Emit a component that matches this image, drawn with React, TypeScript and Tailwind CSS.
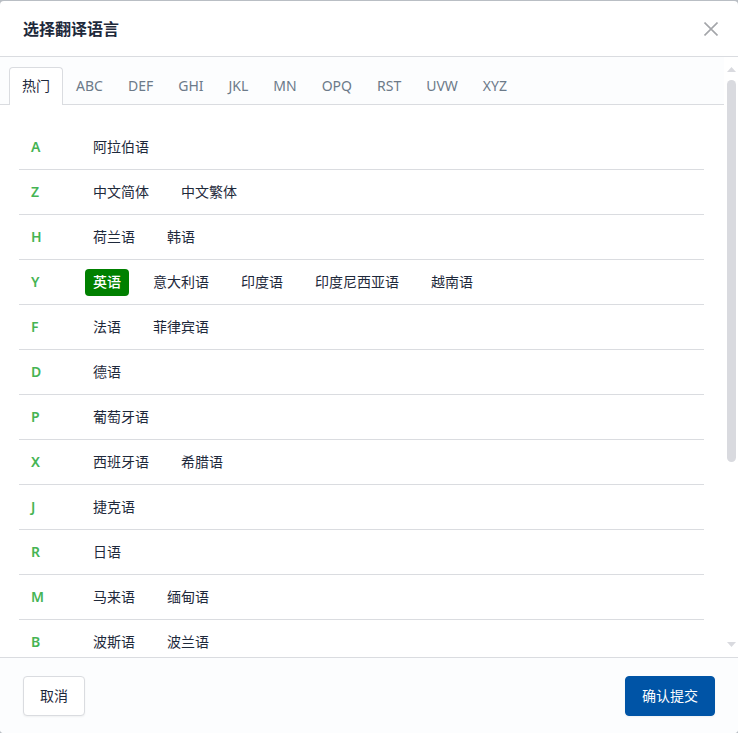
import { useState } from 'react';
import clsx from 'clsx';

const tabs = ['热门', 'ABC', 'DEF', 'GHI', 'JKL', 'MN', 'OPQ', 'RST', 'UVW', 'XYZ'];

const hotLanguages = [
  { letter: 'A', names: ['阿拉伯语'] },
  { letter: 'Z', names: ['中文简体', '中文繁体'] },
  { letter: 'H', names: ['荷兰语', '韩语'] },
  { letter: 'Y', names: ['英语', '意大利语', '印度语', '印度尼西亚语', '越南语'] },
  { letter: 'F', names: ['法语', '菲律宾语'] },
  { letter: 'D', names: ['德语'] },
  { letter: 'P', names: ['葡萄牙语'] },
  { letter: 'X', names: ['西班牙语', '希腊语'] },
  { letter: 'J', names: ['捷克语'] },
  { letter: 'R', names: ['日语'] },
  { letter: 'M', names: ['马来语', '缅甸语'] },
  { letter: 'B', names: ['波斯语', '波兰语'] },
];

function ScrollRail() {
  return (
    <div aria-hidden="true" className="flex w-3.5 shrink-0 flex-col items-center pt-2.5 pb-2.5 pl-px">
      <svg width="9" height="5" viewBox="0 0 9 5" fill="#d9dadf">
        <path d="M4.5 0L9 5H0z" />
      </svg>
      <div className="my-2 w-[9px] min-h-0 flex-1">
        <div className="h-[69%] w-full rounded-full bg-[#d9dadf]" />
      </div>
      <svg width="9" height="5" viewBox="0 0 9 5" fill="#d9dadf">
        <path d="M4.5 5L0 0h9z" />
      </svg>
    </div>
  );
}

export default function App() {
  const [activeTab, setActiveTab] = useState('热门');
  const [selected, setSelected] = useState('英语');

  return (
    <div className="h-screen bg-[#b9bec4] pt-px font-['Noto_Sans','Noto_Sans_CJK_SC',sans-serif] text-sm text-[#1e293b]">
      <div role="dialog" aria-labelledby="dialog-title" className="flex h-full flex-col overflow-hidden rounded bg-white">
        <header className="flex h-14 shrink-0 items-center justify-between border-b border-[#dadce0] pr-5 pl-[23px]">
          <h1 id="dialog-title" className="text-base leading-6 font-semibold">
            选择翻译语言
          </h1>
          <button type="button" aria-label="关闭" className="text-[#a4a6aa]">
            <svg width="14" height="14" viewBox="0 0 14 14" fill="none" stroke="currentColor" strokeWidth="1.6">
              <path d="M0.5 0.5l13 13M13.5 0.5l-13 13" />
            </svg>
          </button>
        </header>

        <main className="flex min-h-0 flex-1">
          <div className="min-w-0 flex-1 overflow-y-auto [scrollbar-width:none]">
            <div role="tablist" className="flex h-12 items-end border-b border-[#dadce0] bg-[#fcfdfe] px-[9px]">
              {tabs.map((tab) => (
                <button
                  key={tab}
                  type="button"
                  role="tab"
                  aria-selected={tab === activeTab}
                  onClick={() => setActiveTab(tab)}
                  className={clsx(
                    '-mb-px h-[38px] rounded-t border border-b-0 pb-0.5 pl-3 leading-5',
                    tab === activeTab
                      ? 'border-[#dadce0] bg-white pr-3 text-[#1e293b]'
                      : 'border-transparent pr-[11px] text-[#6c7a89]',
                  )}
                >
                  {tab}
                </button>
              ))}
            </div>

            <div className="pt-5 pr-5 pl-[19px]">
              <table className="w-full border-separate border-spacing-0">
                <tbody>
                  {hotLanguages.map(({ letter, names }) => (
                    <tr key={letter}>
                      <th
                        scope="row"
                        className="h-[45px] w-[66px] border-b border-[#dadce0] pl-3 text-left font-semibold text-[#45b454]"
                      >
                        {letter}
                      </th>
                      <td className="border-b border-[#dadce0]">
                        <div className="flex gap-4">
                          {names.map((name) => (
                            <button
                              key={name}
                              type="button"
                              aria-pressed={name === selected}
                              onClick={() => setSelected(name)}
                              className={clsx(
                                'h-[27px] rounded px-2 leading-5',
                                name === selected && 'bg-[#008000] font-medium text-white',
                              )}
                            >
                              {name}
                            </button>
                          ))}
                        </div>
                      </td>
                    </tr>
                  ))}
                </tbody>
              </table>
            </div>
          </div>
          <ScrollRail />
        </main>

        <footer className="flex shrink-0 items-center justify-between border-t border-[#dadce0] bg-[#fcfdfe] px-[23px] pt-[18px] pb-[17px]">
          <button type="button" className="h-10 rounded border border-[#dadce0] bg-white px-4 shadow-xs">
            取消
          </button>
          <button type="button" className="h-10 rounded border border-[#0054a6] bg-[#0054a6] px-4 text-[#fcfdfe] shadow-xs">
            确认提交
          </button>
        </footer>
      </div>
    </div>
  );
}
